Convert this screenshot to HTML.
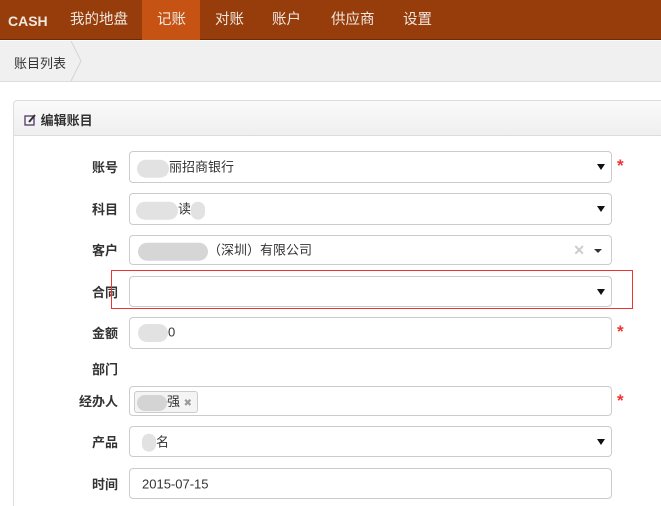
<!DOCTYPE html>
<html><head><meta charset="utf-8"><style>
html{overflow:hidden;height:506px}
body{margin:0;width:661px;height:506px;overflow:hidden;background:#fff;font-family:"Liberation Sans","Noto Sans CJK SC",sans-serif;font-size:13px;color:#333;position:relative}
.nav{position:absolute;left:0;top:0;width:661px;height:40px;background:#973c0b;border-bottom:1px solid #6e2a05;box-sizing:border-box}
.nav span{position:absolute;top:11px;color:#f0e8e0;font-size:14.5px;line-height:18px}
.act{position:absolute;left:142px;top:0;width:58px;height:40px;background:#c65214}
.bc{position:absolute;left:0;top:41px;width:661px;height:40px;background:#f0f0f0;border-bottom:1px solid #ddd}
.panel{position:absolute;left:13px;top:100px;width:660px;height:406px;border:1px solid #ddd;border-bottom:none;border-radius:4px 4px 0 0;box-sizing:border-box}
.ph{height:34px;border-bottom:1px solid #ddd;background:linear-gradient(#fafafa,#efefef);border-radius:4px 4px 0 0}
.lbl{position:absolute;width:80px;left:38px;text-align:right;font-weight:bold;font-size:13px;color:#333}
.inp{position:absolute;left:129px;width:483px;border:1px solid #ccc;border-radius:4px;box-sizing:border-box;background:#fff}
.inp .t{position:absolute;left:12px;top:50%;transform:translateY(-50%);font-size:13px;color:#333}
.car{position:absolute;right:6px;top:50%;margin-top:-3px;width:0;height:0;border-left:4px solid transparent;border-right:4px solid transparent;border-top:6px solid #111}
.star{position:absolute;left:617px;color:#e33;font-size:17px;font-weight:bold}
.blur{display:inline-block;height:18px;background:#e2e2e2;border-radius:9px;vertical-align:middle}
</style></head><body>
<div class="nav">
<div class="act"></div>
<span style="left:8px;font-weight:bold;font-size:14px;top:12px">CASH</span>
<span style="left:70px">我的地盘</span>
<span style="left:157px">记账</span>
<span style="left:215px">对账</span>
<span style="left:272px">账户</span>
<span style="left:331px">供应商</span>
<span style="left:403px">设置</span>
</div>
<div class="bc"><span style="position:absolute;left:14px;top:12px;font-size:13px;color:#333">账目列表</span>
<svg style="position:absolute;left:70px;top:0" width="14" height="40"><path d="M1 0 L11 20 L1 40" stroke="#d4d4d4" fill="none"/></svg></div>
<div class="panel"><div class="ph"><span style="position:absolute;left:10px;top:9px;font-size:13px;font-weight:bold;color:#333">
<svg width="13" height="12" style="vertical-align:-1px"><rect x="1" y="2" width="9" height="9" fill="none" stroke="#55326a" stroke-width="1.3"/><path d="M5 8 L11 1" stroke="#333" stroke-width="2"/></svg> 编辑账目</span></div></div>

<div class="lbl" style="top:157px">账号</div>
<div class="inp" style="top:151px;height:32px"><span class="t"><span class="blur" style="width:32px;margin-left:-5px"></span>丽招商银行</span><div class="car"></div></div>
<div class="star" style="top:156px">*</div>

<div class="lbl" style="top:199px">科目</div>
<div class="inp" style="top:193px;height:32px"><span class="t"><span class="blur" style="width:42px;margin-left:-6px"></span>读<span class="blur" style="width:14px"></span></span><div class="car"></div></div>

<div class="lbl" style="top:240px">客户</div>
<div class="inp" style="top:235px;height:30px"><span class="t"><span class="blur" style="width:70px;margin-left:-4px;background:#d6d6d6"></span>（深圳）有限公司</span>
<span style="position:absolute;right:26px;top:6px;color:#ccc;font-size:14px;font-weight:bold">✕</span>
<div class="car" style="border-top-width:4px;border-left-width:4px;border-right-width:4px;margin-top:-1px;right:9px;border-top-color:#333"></div></div>

<div class="lbl" style="top:282px">合同</div>
<div class="inp" style="top:276px;height:31px"><div class="car"></div></div>
<div style="position:absolute;left:111px;top:270px;width:522px;height:39px;border:1px solid #e33;box-sizing:border-box"></div>

<div class="lbl" style="top:323px">金额</div>
<div class="inp" style="top:317px;height:32px"><span class="t"><span class="blur" style="width:30px;margin-left:-4px"></span>0</span></div>
<div class="star" style="top:322px">*</div>

<div class="lbl" style="top:359px">部门</div>

<div class="lbl" style="top:391px">经办人</div>
<div class="inp" style="top:386px;height:30px"><span style="position:absolute;left:4px;top:4px;height:20px;border:1px solid #ccc;border-radius:3px;background:#f4f4f4;padding:0 5px;line-height:20px;font-size:13px"><span class="blur" style="width:30px;height:16px;margin-left:-3px;background:#d4d4d4"></span>强 <span style="color:#999;font-size:10px">✖</span></span></div>
<div class="star" style="top:391px">*</div>

<div class="lbl" style="top:432px">产品</div>
<div class="inp" style="top:426px;height:31px"><span class="t"><span class="blur" style="width:14px;margin-left:0"></span>名</span><div class="car"></div></div>

<div class="lbl" style="top:474px">时间</div>
<div class="inp" style="top:468px;height:31px"><span class="t">2015-07-15</span></div>
</body></html>
